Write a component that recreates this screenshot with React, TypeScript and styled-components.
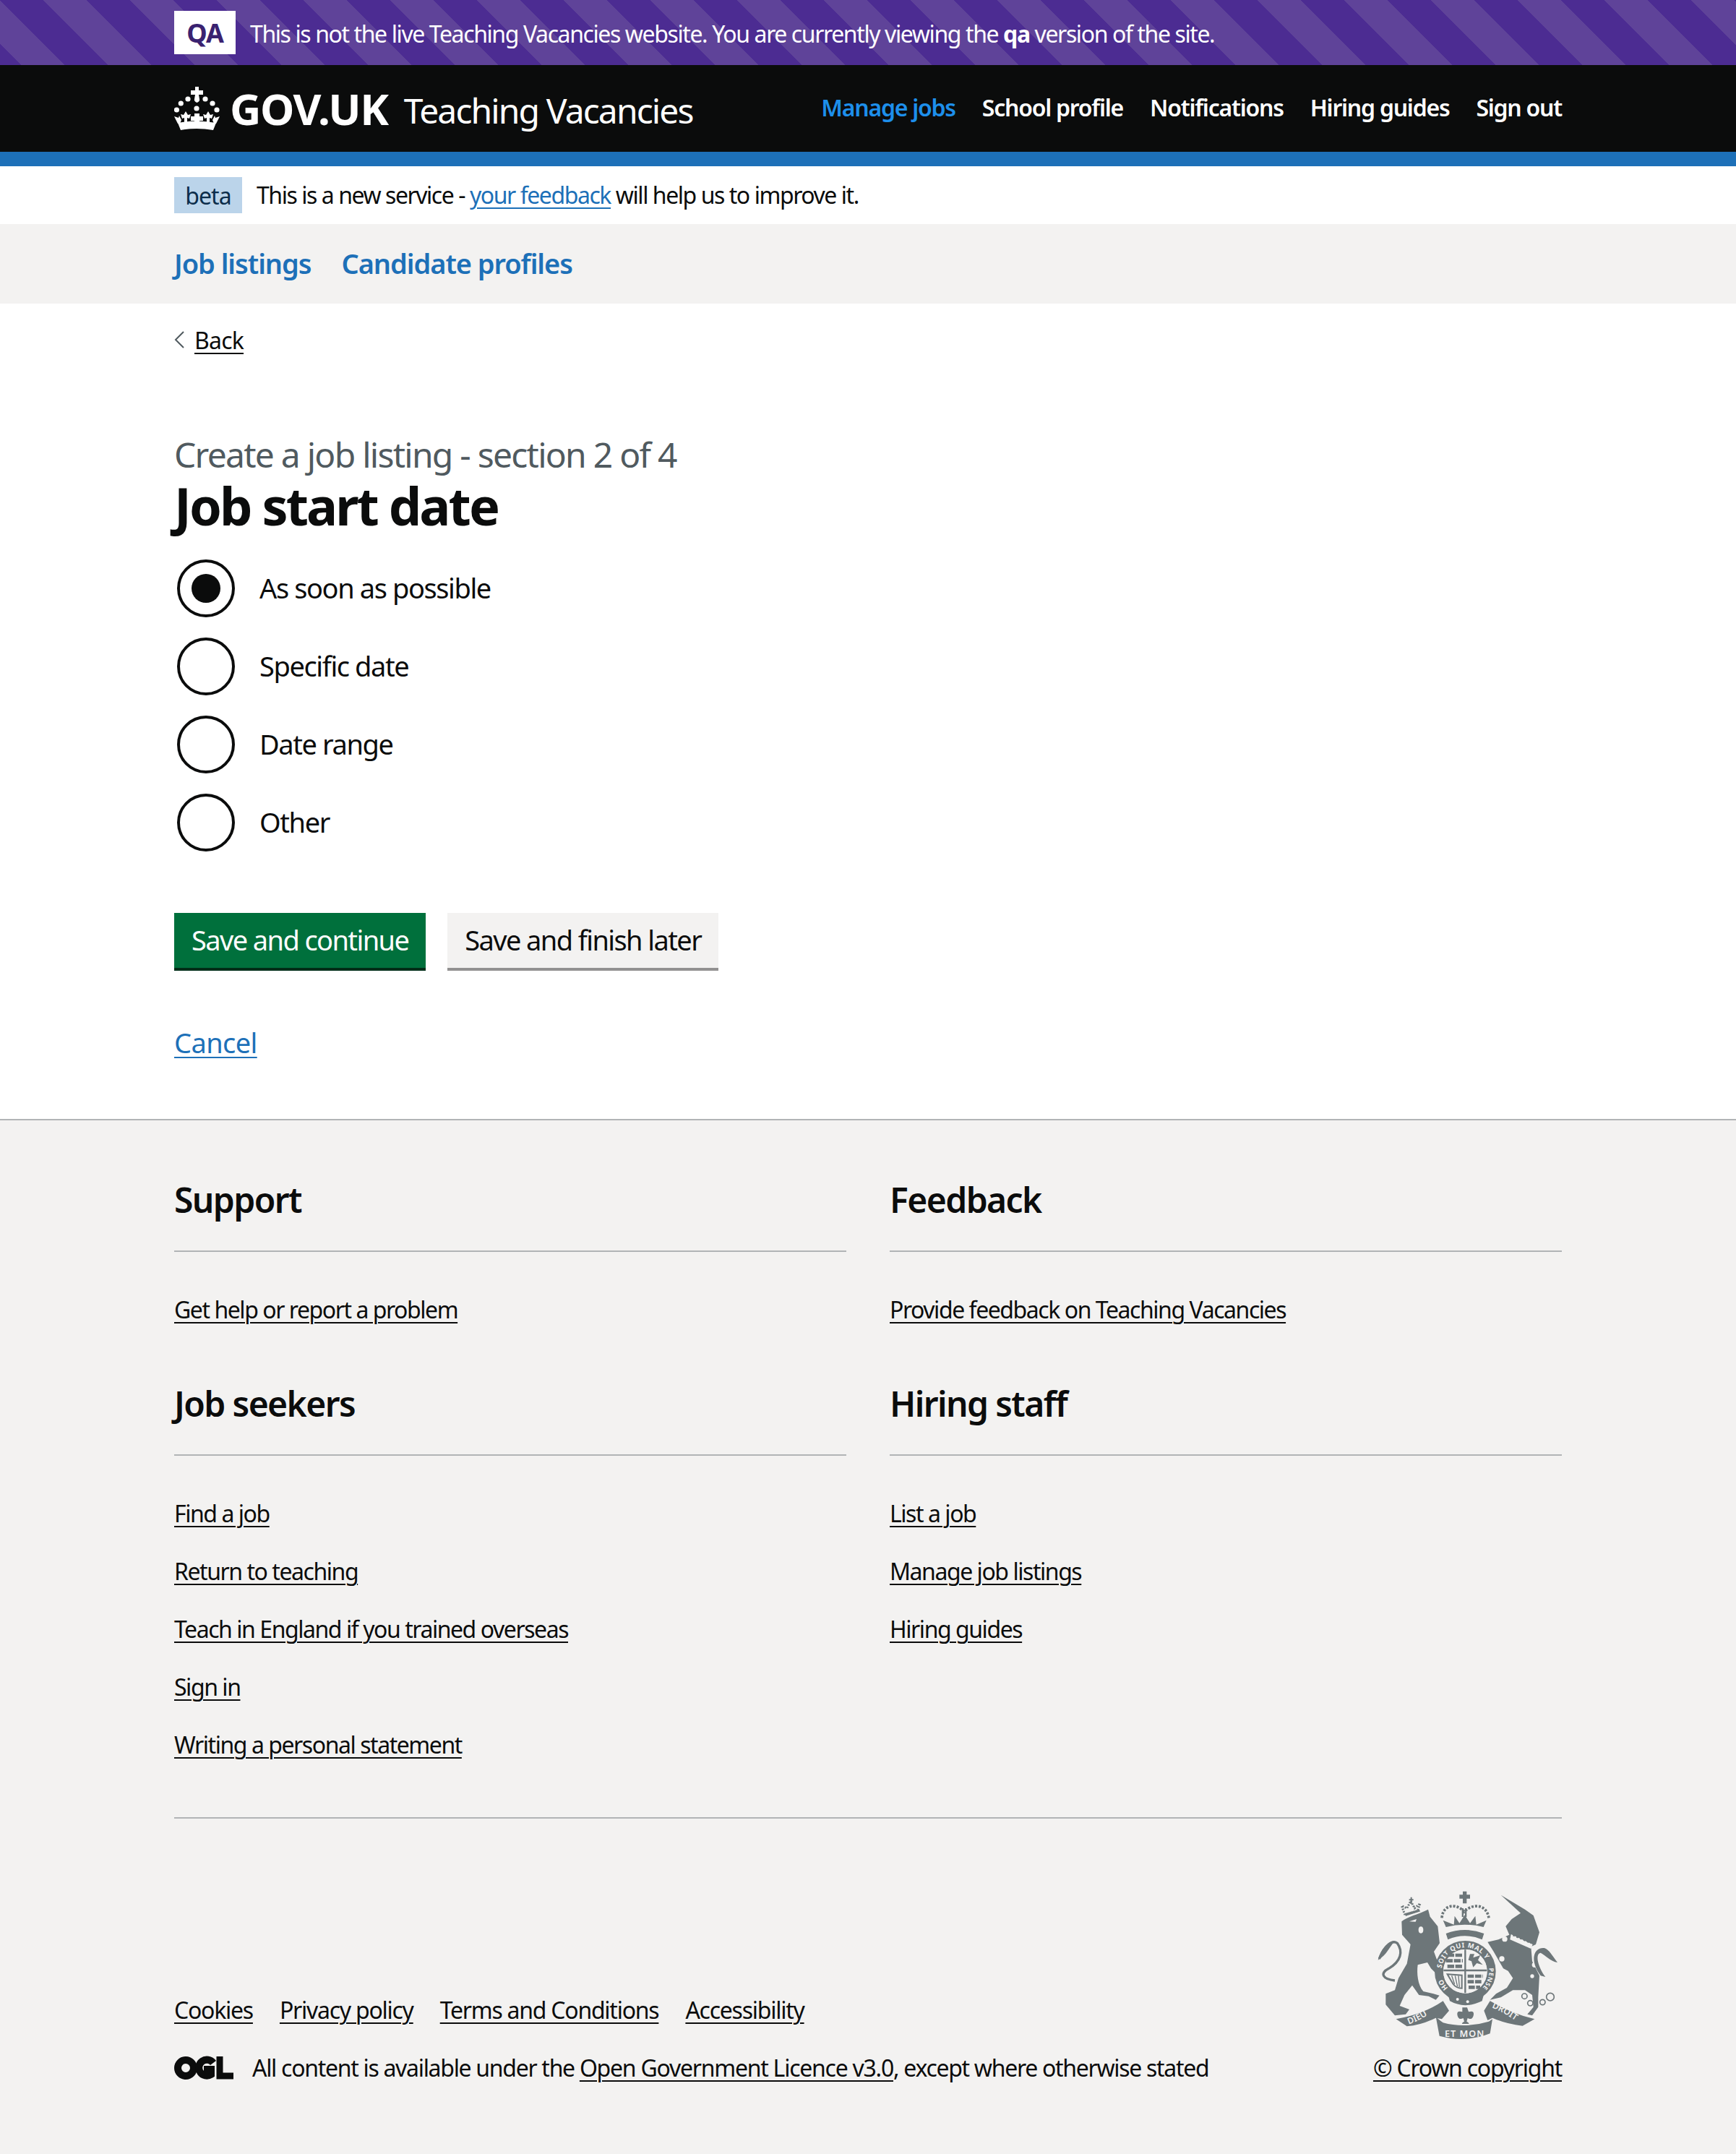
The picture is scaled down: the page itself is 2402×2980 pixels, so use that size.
import React from 'react';
import styled, { createGlobalStyle } from 'styled-components';

const FONT = '"Noto Sans", "Liberation Sans", Arial, sans-serif';

const GlobalStyle = createGlobalStyle`
  html, body {
    margin: 0;
    padding: 0;
    background: #fff;
    color: #0b0c0c;
    font-family: ${FONT};
  }
  * { box-sizing: border-box; }
`;

const Container = styled.div`
  width: 1920px;
  margin: 0 auto;
`;

const EnvBanner = styled.div`
  height: 90px;
  display: flex;
  align-items: center;
  background: repeating-linear-gradient(
    45deg,
    #4c2c92 0,
    #4c2c92 21.2px,
    #5f4399 21.2px,
    #5f4399 63.6px,
    #4c2c92 63.6px,
    #4c2c92 84.85px
  );
`;

const EnvInner = styled(Container)`
  display: flex;
  align-items: center;
  gap: 20px;
  color: #fff;
  font-size: 32px;
  letter-spacing: -1.4px;
`;

const EnvText = styled.span`
  padding-top: 2px;
`;

const EnvTag = styled.span`
  width: 85px;
  height: 60px;
  background: #fff;
  color: #3a2270;
  font-weight: 700;
  font-size: 36px;
  letter-spacing: -1px;
  display: flex;
  align-items: center;
  justify-content: center;
`;

const Header = styled.header`
  height: 140px;
  background: #0b0c0c;
  border-bottom: 20px solid #1d70b8;
`;

const HeaderInner = styled(Container)`
  height: 120px;
  display: flex;
  align-items: center;
  justify-content: space-between;
  color: #fff;
`;

const Logo = styled.div`
  display: flex;
  align-items: center;
`;

const GovUk = styled.span`
  font-size: 60px;
  font-weight: 700;
  letter-spacing: -1.4px;
  margin-left: 13px;
  line-height: 60px;
`;

const ServiceName = styled.span`
  font-size: 48px;
  margin-left: 22px;
  letter-spacing: -1.9px;
  line-height: 60px;
  padding-top: 6px;
`;

const HeaderNav = styled.nav`
  display: flex;
  gap: 37px;
  font-size: 32px;
  font-weight: 600;
  letter-spacing: -1.25px;
  padding-bottom: 4px;
`;

const HeaderLink = styled.a<{ $active?: boolean }>`
  color: ${(p) => (p.$active ? '#1d8feb' : '#fff')};
`;

const PhaseBanner = styled(Container)`
  height: 80px;
  display: flex;
  align-items: center;
  gap: 20px;
  font-size: 32px;
  letter-spacing: -1.45px;
`;

const PhaseText = styled.span`
  padding-bottom: 2px;
`;

const PhaseTag = styled.span`
  width: 94px;
  height: 50px;
  background: #bbd4ea;
  color: #0c2d4a;
  letter-spacing: -0.9px;
  display: flex;
  align-items: center;
  justify-content: center;
`;

const InlineLink = styled.a`
  color: #1d70b8;
  text-decoration: underline;
  text-decoration-thickness: 2px;
  text-underline-offset: 5px;
`;

const SubNav = styled.div`
  height: 110px;
  background: #f3f2f1;
`;

const SubNavInner = styled(Container)`
  height: 100%;
  display: flex;
  align-items: center;
  gap: 42px;
  padding-bottom: 3px;
  font-size: 38px;
  font-weight: 600;
  letter-spacing: -1.05px;
  color: #1d70b8;
`;

const Main = styled(Container)`
  padding-top: 30px;
`;

const BackLink = styled.a`
  display: inline-flex;
  align-items: center;
  gap: 14px;
  height: 40px;
  font-size: 32px;
  letter-spacing: -0.8px;
  color: #0b0c0c;
`;

const BackText = styled.span`
  text-decoration: underline;
  text-decoration-thickness: 2px;
  text-underline-offset: 5px;
`;

const Caption = styled.div`
  margin-top: 109px;
  font-size: 48px;
  line-height: 60px;
  color: #505a5f;
  letter-spacing: -1.75px;
`;

const Title = styled.h1`
  margin: 0 0 31px;
  font-size: 72px;
  line-height: 80px;
  font-weight: 700;
  letter-spacing: -2.9px;
`;

const RadioList = styled.div`
  display: flex;
  flex-direction: column;
  gap: 20px;
`;

const RadioRow = styled.label`
  display: flex;
  align-items: center;
  height: 88px;
  padding-left: 4px;
  gap: 34px;
  font-size: 38px;
  letter-spacing: -1.4px;
`;

const RadioCircle = styled.span<{ $checked?: boolean }>`
  width: 80px;
  height: 80px;
  border: 4px solid #0b0c0c;
  border-radius: 50%;
  display: flex;
  align-items: center;
  justify-content: center;
  &::after {
    content: '';
    display: ${(p) => (p.$checked ? 'block' : 'none')};
    width: 40px;
    height: 40px;
    border-radius: 50%;
    background: #0b0c0c;
  }
`;

const RadioLabel = styled.span`
  padding-bottom: 2px;
`;

const Actions = styled.div`
  display: flex;
  gap: 30px;
  margin-top: 81px;
`;

const Button = styled.button<{ $secondary?: boolean }>`
  height: 80px;
  padding: 0 24px 6px;
  border: 0;
  font-family: inherit;
  font-size: 38px;
  letter-spacing: -1.6px;
  color: ${(p) => (p.$secondary ? '#0b0c0c' : '#fff')};
  background: ${(p) => (p.$secondary ? '#f3f2f1' : '#00703c')};
  box-shadow: inset 0 -4px 0 ${(p) => (p.$secondary ? '#929191' : '#002d18')};
`;

const CancelLink = styled(InlineLink)`
  display: block;
  width: max-content;
  margin-top: 77px;
  font-size: 38px;
  line-height: 44px;
  letter-spacing: -0.6px;
`;

const Footer = styled.footer`
  margin-top: 84px;
  height: 1432px;
  background: #f3f2f1;
  border-top: 2px solid #b1b4b6;
  padding-top: 80px;
`;

const FooterGrid = styled.div`
  display: grid;
  grid-template-columns: 930px 930px;
  column-gap: 60px;
`;

const FooterSection = styled.div`
  margin-bottom: 80px;
`;

const FooterHeading = styled.h2`
  margin: 0;
  font-size: 48px;
  line-height: 60px;
  font-weight: 600;
  letter-spacing: -1.6px;
  padding-bottom: 40px;
  border-bottom: 2px solid #b1b4b6;
`;

const FooterList = styled.ul`
  list-style: none;
  margin: 0;
  padding: 60px 0 0;
  display: flex;
  flex-direction: column;
  gap: 40px;
`;

const FooterLink = styled.a`
  display: inline-block;
  font-size: 32px;
  line-height: 40px;
  letter-spacing: -1.45px;
  color: #0b0c0c;
  text-decoration: underline;
  text-decoration-thickness: 2px;
  text-underline-offset: 5px;
`;

const MetaLink = styled(FooterLink)`
  letter-spacing: -1.25px;
`;

const Divider = styled.hr`
  border: 0;
  border-top: 2px solid #b1b4b6;
  margin: 0;
`;

const Meta = styled.div`
  display: flex;
  justify-content: space-between;
  align-items: flex-end;
  margin-top: 100px;
`;

const MetaLinks = styled.div`
  display: flex;
  gap: 37px;
  margin-bottom: 40px;
`;

const Licence = styled.div`
  display: flex;
  align-items: center;
  gap: 26px;
  font-size: 32px;
  line-height: 40px;
  letter-spacing: -1.3px;
`;

const CrestBlock = styled.div`
  display: flex;
  flex-direction: column;
  align-items: flex-end;
  gap: 20px;
`;

const CrestWrap = styled.div`
  margin-right: 6px;
  line-height: 0;
`;

function BackChevron() {
  return (
    <svg width="14" height="24" viewBox="0 0 14 24" fill="none" stroke="#505a5f" strokeWidth="2">
      <polyline points="13,1 2,12 13,23" />
    </svg>
  );
}

function CrownLogo() {
  return (
    <svg width="64" height="60" viewBox="0 0 64 60" fill="#fff">
      <path d="M29,0 h5 v5 h6 v6 h-6 l1,6 q1,3 -3.5,5 q-4.5,-2 -3.5,-5 l1,-6 h-6 v-6 h6 Z" />
      <circle cx="9.3" cy="23" r="3.6" />
      <circle cx="19" cy="17" r="3.6" />
      <circle cx="43" cy="17" r="3.6" />
      <circle cx="53" cy="23" r="3.6" />
      <circle cx="3.4" cy="32" r="3.6" />
      <circle cx="59" cy="32" r="3.6" />
      <circle cx="31" cy="30" r="3.6" />
      <path d="M5,50 Q31,45 58,50 L54,60 Q31,56 9,60 Z" />
      <path d="M0,41 L6,43 L7,40 L10,46 L8,51 L5,51 Z" />
      <path d="M63,41 L57,43 L56,40 L53,46 L55,51 L58,51 Z" />
      <path d="M16,34 L19,39 L23,38 L21,44 L18,43 L18,50 L14,50 L14,43 L11,44 L9,38 L13,39 Z" />
      <path d="M47,34 L50,39 L54,38 L52,44 L49,43 L49,50 L45,50 L45,43 L42,44 L40,38 L44,39 Z" />
      <path d="M28,37 h7 v4 h5 v6 h-5 v3 h-7 v-3 h-5 v-6 h5 Z" />
    </svg>
  );
}

function OglLogo() {
  return (
    <svg width="82" height="34" viewBox="0 0 82 34" fill="none" stroke="#0b0c0c" strokeWidth="10">
      <circle cx="16" cy="17" r="11" />
      <path d="M54,10 A11,11 0 1 0 51,26 L51,19 H41" />
      <path d="M63,1 V28 H82" strokeWidth="9" />
    </svg>
  );
}

function Crest() {
  const c = '#6d7679';
  const bg = '#f3f2f1';
  return (
    <svg width="250" height="205" viewBox="75 78 750 615" fill={c}>
      <defs>
        <path id="garterPath" d="M343,412 A99,99 0 0 1 541,412" />
        <path id="garterLow" d="M372,482 A99,99 0 0 1 344,425" />
        <path id="garterRight" d="M540,398 A99,99 0 0 1 500,492" />
        <path id="dieuPath" d="M208,632 Q270,610 318,570" />
        <path id="droitPath" d="M552,562 Q610,585 672,632" />
      </defs>
      {/* lion */}
      <path d="M178,205 C200,185 250,175 288,155 L296,185 L328,225 L336,295 L312,330 L345,420 L330,430 L300,400 L285,375 L245,385 C240,420 245,470 268,495 L310,505 L335,512 L320,530 L290,515 L250,510 L222,470 L190,510 L170,555 L210,570 L195,590 L150,595 L112,550 L112,505 L150,490 L165,440 L200,380 L215,300 L180,260 Z" />
      <path d="M150,450 C100,445 85,420 125,400 C175,370 185,330 160,295 C140,280 110,300 85,360" fill="none" stroke={c} strokeWidth="10" />
      <path d="M80,365 C90,320 120,290 150,285 C125,315 115,345 80,365 Z" />
      <ellipse cx="258" cy="240" rx="10" ry="14" fill={bg} />
      <path d="M210,205 L240,195 L236,206 Z" fill={bg} />
      {/* lion crown */}
      <path d="M192,178 L178,140 L200,150 L216,120 L232,150 L255,130 L245,160 Z" fill="none" stroke={c} strokeWidth="9" strokeDasharray="6 5" />
      <path d="M190,172 L250,155 L256,163 L195,182 Z" />
      <path d="M209,112 h6 v-8 h6 v8 h6 v6 h-6 v14 h-6 v-14 h-6 Z" />
      {/* unicorn */}
      <path d="M535,290 L580,280 L625,260 L610,225 L635,195 L672,170 L590,95 L690,155 L725,180 L750,250 L735,300 L715,310 L720,370 L750,430 L745,520 L745,560 L720,595 L700,590 L725,560 L720,510 L690,490 L640,490 L590,520 L545,530 L570,505 L615,480 L640,440 L620,410 L600,400 L560,330 Z" />
      <path d="M632,258 L722,300 L715,318 L628,280 Z" fill={bg} />
      <path d="M640,262 L715,295" stroke={c} strokeWidth="6" strokeDasharray="8 8" fill="none" />
      <circle cx="606" cy="278" r="11" fill={bg} />
      <circle cx="594" cy="360" r="11" fill={bg} />
      <circle cx="730" cy="385" r="11" fill={bg} />
      <circle cx="720" cy="432" r="8" fill={bg} />
      <path d="M755,430 C705,360 730,310 770,315 C790,320 805,350 825,375 C795,370 775,345 755,335 C730,340 745,395 775,435 Z" />
      <g fill="none" stroke={c} strokeWidth="5">
        <circle cx="688" cy="515" r="11" />
        <circle cx="712" cy="544" r="11" />
        <circle cx="763" cy="540" r="11" />
        <circle cx="795" cy="518" r="16" />
      </g>
      {/* royal crown */}
      <path d="M362,255 Q440,225 520,255 L512,280 Q440,250 370,280 Z" />
      <path d="M362,228 L350,200 L395,218 L398,182 L418,212 L440,178 L462,212 L484,182 L488,218 L530,200 L518,228 Q440,208 362,228 Z" />
      <path d="M345,190 C350,130 410,130 438,165 C470,130 530,130 540,190" fill="none" stroke={c} strokeWidth="11" strokeDasharray="9 6" />
      <rect x="428" y="150" width="7" height="36" />
      <rect x="441" y="150" width="7" height="36" />
      <path d="M432,80 h16 v14 h14 v16 h-14 v20 h-16 v-20 h-14 v-16 h14 Z" />
      {/* garter */}
      <circle cx="442" cy="412" r="109" fill="none" stroke={c} strokeWidth="36" />
      <circle cx="442" cy="412" r="91" fill={bg} />
      <text fontFamily={FONT} fontWeight="700" fontSize="28" fill={bg} letterSpacing="2">
        <textPath href="#garterPath" startOffset="4%">SOIT QUI MAL Y</textPath>
      </text>
      <text fontFamily={FONT} fontWeight="700" fontSize="28" fill={bg}>
        <textPath href="#garterLow" startOffset="2%">HO</textPath>
      </text>
      <text fontFamily={FONT} fontWeight="700" fontSize="26" fill={bg} letterSpacing="2">
        <textPath href="#garterRight">PENSE</textPath>
      </text>
      {/* shield quarters */}
      <path d="M352,408 H532 M442,322 V502" stroke={c} strokeWidth="7" />
      <g stroke={c} fill="none">
        <path d="M368,345 h64 M362,368 h70 M368,391 h64" strokeDasharray="28 5" strokeWidth="14" />
        <path d="M452,432 h64 M452,455 h60 M456,478 h48" strokeDasharray="26 5" strokeWidth="14" />
        <path d="M368,424 L428,428 V482 Q405,482 392,465 Z" strokeWidth="6" />
        <path d="M386,430 L398,466 M400,430 L410,475 M414,430 L418,478" strokeWidth="4" />
      </g>
      <path d="M462,340 L480,340 L475,355 L505,345 L495,365 L515,385 L490,378 L475,395 L468,370 L455,365 Z" />
      <path d="M370,505 Q440,560 520,505 L512,535 Q440,570 378,535 Z" />
      <circle cx="410" cy="528" r="6" fill={bg} />
      <circle cx="452" cy="538" r="6" fill={bg} />
      {/* ribbons */}
      <path d="M155,610 Q270,590 350,535 L375,575 L345,610 L320,605 Q260,635 200,640 Z" />
      <path d="M520,575 L545,535 Q640,590 730,610 L680,638 Q610,630 555,605 L535,615 Z" />
      <path d="M320,600 Q335,615 350,625 Q440,650 540,620 L555,610 L545,670 Q440,710 335,680 Z" />
      <text fontFamily={FONT} fontWeight="600" fontSize="36" fill={bg}>
        <textPath href="#dieuPath">DIEU</textPath>
      </text>
      <text fontFamily={FONT} fontWeight="600" fontSize="36" fill={bg}>
        <textPath href="#droitPath">DROIT</textPath>
      </text>
      <text x="357" y="683" fontFamily={FONT} fontWeight="600" fontSize="38" letterSpacing="3" fill={bg}>ET MON</text>
      {/* fleur */}
      <path d="M430,562 h20 l6,18 q26,-8 20,16 q-6,20 -24,10 l-4,14 q8,2 10,10 h-30 q2,-8 10,-10 l-4,-14 q-18,10 -24,-10 q-6,-24 20,-16 Z" />
    </svg>
  );
}

export default function App() {
  return (
    <>
      <GlobalStyle />
      <EnvBanner>
        <EnvInner>
          <EnvTag>QA</EnvTag>
          <EnvText>
            This is not the live Teaching Vacancies website. You are currently viewing the <b>qa</b> version of the site.
          </EnvText>
        </EnvInner>
      </EnvBanner>
      <Header>
        <HeaderInner>
          <Logo>
            <CrownLogo />
            <GovUk>GOV.UK</GovUk>
            <ServiceName>Teaching Vacancies</ServiceName>
          </Logo>
          <HeaderNav>
            <HeaderLink $active>Manage jobs</HeaderLink>
            <HeaderLink>School profile</HeaderLink>
            <HeaderLink>Notifications</HeaderLink>
            <HeaderLink>Hiring guides</HeaderLink>
            <HeaderLink>Sign out</HeaderLink>
          </HeaderNav>
        </HeaderInner>
      </Header>
      <PhaseBanner>
        <PhaseTag>beta</PhaseTag>
        <PhaseText>
          This is a new service - <InlineLink href="#">your feedback</InlineLink> will help us to improve it.
        </PhaseText>
      </PhaseBanner>
      <SubNav>
        <SubNavInner>
          <span>Job listings</span>
          <span>Candidate profiles</span>
        </SubNavInner>
      </SubNav>
      <Main>
        <BackLink>
          <BackChevron />
          <BackText>Back</BackText>
        </BackLink>
        <Caption>Create a job listing - section 2 of 4</Caption>
        <Title>Job start date</Title>
        <RadioList>
          <RadioRow><RadioCircle $checked /><RadioLabel>As soon as possible</RadioLabel></RadioRow>
          <RadioRow><RadioCircle /><RadioLabel>Specific date</RadioLabel></RadioRow>
          <RadioRow><RadioCircle /><RadioLabel>Date range</RadioLabel></RadioRow>
          <RadioRow><RadioCircle /><RadioLabel>Other</RadioLabel></RadioRow>
        </RadioList>
        <Actions>
          <Button>Save and continue</Button>
          <Button $secondary>Save and finish later</Button>
        </Actions>
        <CancelLink href="#">Cancel</CancelLink>
      </Main>
      <Footer>
        <Container>
          <FooterGrid>
            <FooterSection>
              <FooterHeading>Support</FooterHeading>
              <FooterList>
                <li><FooterLink>Get help or report a problem</FooterLink></li>
              </FooterList>
            </FooterSection>
            <FooterSection>
              <FooterHeading>Feedback</FooterHeading>
              <FooterList>
                <li><FooterLink>Provide feedback on Teaching Vacancies</FooterLink></li>
              </FooterList>
            </FooterSection>
            <FooterSection>
              <FooterHeading>Job seekers</FooterHeading>
              <FooterList>
                <li><FooterLink>Find a job</FooterLink></li>
                <li><FooterLink>Return to teaching</FooterLink></li>
                <li><FooterLink>Teach in England if you trained overseas</FooterLink></li>
                <li><FooterLink>Sign in</FooterLink></li>
                <li><FooterLink>Writing a personal statement</FooterLink></li>
              </FooterList>
            </FooterSection>
            <FooterSection>
              <FooterHeading>Hiring staff</FooterHeading>
              <FooterList>
                <li><FooterLink>List a job</FooterLink></li>
                <li><FooterLink>Manage job listings</FooterLink></li>
                <li><FooterLink>Hiring guides</FooterLink></li>
              </FooterList>
            </FooterSection>
          </FooterGrid>
          <Divider />
          <Meta>
            <div>
              <MetaLinks>
                <MetaLink>Cookies</MetaLink>
                <MetaLink>Privacy policy</MetaLink>
                <MetaLink>Terms and Conditions</MetaLink>
                <MetaLink>Accessibility</MetaLink>
              </MetaLinks>
              <Licence>
                <OglLogo />
                <span>
                  All content is available under the <MetaLink>Open Government Licence v3.0</MetaLink>, except where otherwise stated
                </span>
              </Licence>
            </div>
            <CrestBlock>
              <CrestWrap>
                <Crest />
              </CrestWrap>
              <MetaLink>© Crown copyright</MetaLink>
            </CrestBlock>
          </Meta>
        </Container>
      </Footer>
    </>
  );
}
